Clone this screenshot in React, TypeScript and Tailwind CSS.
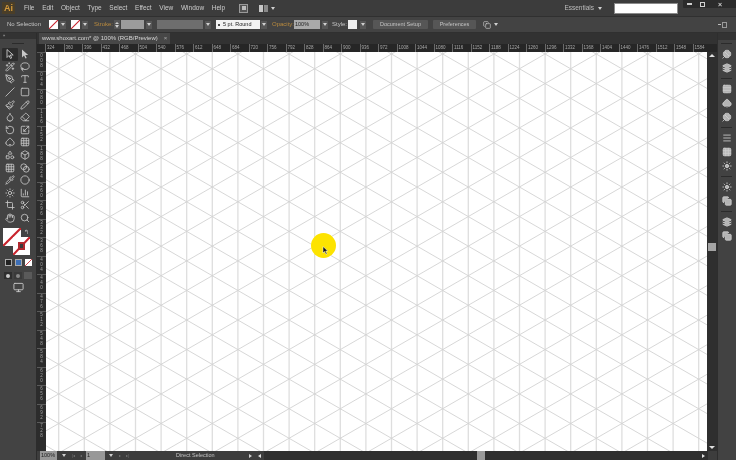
import {
  Circle,
  Droplet,
  Eraser,
  Hand,
  Lasso,
  Layers,
  Paintbrush,
  Pencil,
  PenTool,
  Pipette,
  RotateCcw,
  Scaling,
  Search,
  Slash,
  Square,
  Sun,
  Type,
  Wand2,
  Blend,
  BarChart3,
  Grid3x3,
  Crop,
  Scissors,
  Shapes,
  Box,
  Copy,
  Menu,
  Table,
  Spade,
  Clover,
  Monitor,
} from 'lucide-react';

const menus = ['File', 'Edit', 'Object', 'Type', 'Select', 'Effect', 'View', 'Window', 'Help'];

const tools = [
  MousePointerHollow,
  MousePointerSolid,
  Wand2,
  Lasso,
  PenTool,
  Type,
  Slash,
  Square,
  Paintbrush,
  Pencil,
  Droplet,
  Eraser,
  RotateCcw,
  Scaling,
  Spade,
  Grid3x3,
  Shapes,
  Box,
  Grid3x3,
  Blend,
  Pipette,
  Circle,
  Sun,
  BarChart3,
  Crop,
  Scissors,
  Hand,
  Search,
];

function MousePointerHollow({ size = 10, className = '' }: { size?: number; className?: string }) {
  return (
    <svg width={size} height={size} viewBox="0 0 10 10" className={className}>
      <path d="M2 .5v8l2-2 1.5 3 1.2-.6L5.3 6h2.900z" fill="none" stroke="currentColor" strokeWidth="0.9" />
    </svg>
  );
}

function MousePointerSolid({ size = 10, className = '' }: { size?: number; className?: string }) {
  return (
    <svg width={size} height={size} viewBox="0 0 10 10" className={className}>
      <path d="M2 .5v8l2-2 1.5 3 1.2-.6L5.3 6h2.900z" fill="currentColor" />
    </svg>
  );
}

function Caret({ className = 'border-t-[#cfcfcf]' }: { className?: string }) {
  return <div className={`h-0 w-0 border-x-[2.5px] border-t-[3px] border-x-transparent ${className}`} />;
}

function DropBtn({ className = 'mx-0' }: { className?: string }) {
  return (
    <div className={`flex h-[8px] w-[6px] items-center justify-center bg-[#565656] ${className}`}>
      <Caret />
    </div>
  );
}

function NoneSwatch({ className = '' }: { className?: string }) {
  return (
    <div className={`bg-white ${className}`}>
      <svg viewBox="0 0 10 10" className="h-full w-full" preserveAspectRatio="none">
        <line x1="0" y1="10" x2="10" y2="0" stroke="#c8232c" strokeWidth="1.2" />
      </svg>
    </div>
  );
}

function IsoGrid() {
  const w = 661;
  const h = 399;
  const dx = 25.6;
  const dy = 29.56;
  const slope = 0.5774;
  const verticals = Array.from({ length: 27 }, (_, i) => 12.7 + i * dx);
  const offsets = Array.from({ length: 50 }, (_, i) => 2 + (i - 25) * dy);
  return (
    <svg width={w} height={h} className="block">
      {verticals.map((x) => (
        <line key={x} x1={x} y1={0} x2={x} y2={h} stroke="#dedede" strokeWidth="1.3" />
      ))}
      {offsets.map((o) => (
        <g key={o} stroke="#d2d2d2" strokeWidth="0.9">
          <line x1={0} y1={o - slope * 38.3} x2={w} y2={o + slope * (w - 38.3)} />
          <line x1={0} y1={o + slope * 38.3} x2={w} y2={o - slope * (w - 38.3)} />
        </g>
      ))}
    </svg>
  );
}

function Ruler() {
  const labels = Array.from({ length: 36 }, (_, i) => 324 + i * 36);
  return (
    <div className="flex h-[8px] items-center overflow-hidden bg-[#262626] pl-[8px]">
      {labels.map((n) => (
        <div key={n} className="w-[18.5px] shrink-0 border-l border-[#6a6a6a] pl-[1px] text-[4.5px] leading-[8px] text-[#a8a8a8]">
          {n}
        </div>
      ))}
    </div>
  );
}

function VRuler() {
  const labels = Array.from({ length: 21 }, (_, i) => String(8 + i * 36).padStart(3, '0'));
  return (
    <div className="flex w-[9px] shrink-0 flex-col overflow-hidden bg-[#2c2c2c]">
      {labels.map((n, i) => (
        <div key={i} className="flex h-[18.5px] shrink-0 flex-col items-center border-t border-[#5a5a5a] text-[4.5px] leading-[5px] text-[#a0a0a0]">
          {n.split('').map((d, j) => (
            <span key={j}>{d}</span>
          ))}
        </div>
      ))}
    </div>
  );
}

function RightDock() {
  const groups = [
    [Clover, Layers],
    [Table, Spade, Clover],
    [Menu, Grid3x3, Sun],
    [Sun, Copy],
    [Layers, Copy],
  ];
  return (
    <div className="flex w-[19px] shrink-0 flex-col border-l border-[#2e2e2e] bg-[#424242]">
      <div className="h-[7px] bg-[#333333]" />
      {groups.map((g, i) => (
        <div key={i} className="flex flex-col items-center pr-[1px]">
          <div className="mb-[3px] mt-[3px] h-[1px] w-[11px] bg-[#2b2b2b]" />
          {g.map((Icon, j) => (
            <div key={j} className="flex h-[14px] items-center justify-center">
              <Icon size={10} className="fill-[#b4b4b4] text-[#cfcfcf]" />
            </div>
          ))}
        </div>
      ))}
    </div>
  );
}

function ToolColumn() {
  return (
    <div className="flex w-[37px] shrink-0 flex-col border-r border-[#2c2c2c] bg-[#434343]">
      <div className="flex h-[6px] items-center bg-[#333333] pl-[3px] text-[4px] leading-[6px] text-[#bbbbbb]">»</div>
      <div className="mx-auto mb-[4px] mt-[4px] h-[1px] w-[12px] bg-[#2b2b2b]" />
      <div className="grid grid-cols-2 auto-rows-[12.6px] pl-[2px] pr-[3px]">
        {tools.map((Icon, i) => (
          <div key={i} className={`flex items-center justify-center ${i === 0 ? 'rounded-[1px] bg-[#2c2c2c]' : ''}`}>
            <Icon size={10} className="text-[#c8c8c8]" />
          </div>
        ))}
      </div>
      <div className="relative mt-[4px] h-[30px]">
        <NoneSwatch className="absolute left-[3px] top-0 h-[18px] w-[18px]" />
        <NoneSwatch className="absolute left-[13px] top-[9px] h-[18px] w-[17px]" />
        <div className="absolute left-[18px] top-[14px] h-[8px] w-[7px] border-[2px] border-[#b0282e] bg-[#3a3a3a]" />
        <div className="absolute left-[24px] top-[1px] text-[6px] leading-[6px] text-[#c8c8c8]">↰</div>
      </div>
      <div className="mt-[1px] flex justify-center gap-[3px]">
        <div className="h-[7px] w-[7px] border border-[#aaaaaa] bg-[#222222]" />
        <div className="h-[7px] w-[7px] border border-[#aaaaaa] bg-[#3d6fb8]" />
        <NoneSwatch className="h-[7px] w-[7px]" />
      </div>
      <div className="mt-[6px] flex justify-center gap-[2px]">
        <div className="flex h-[7px] w-[8px] items-center justify-center bg-[#2e2e2e]"><div className="h-[4px] w-[4px] rounded-full bg-[#cccccc]" /></div>
        <div className="flex h-[7px] w-[8px] items-center justify-center bg-[#3a3a3a]"><div className="h-[4px] w-[4px] rounded-full bg-[#888888]" /></div>
        <div className="h-[7px] w-[8px] bg-[#5a5a5a]" />
      </div>
      <div className="mt-[3px] flex justify-center">
        <Monitor size={11} className="text-[#c8c8c8]" />
      </div>
    </div>
  );
}

function MenuBar() {
  return (
    <div className="flex h-[16px] shrink-0 items-center bg-[#3c3c3c]">
      <div className="ml-[2px] flex h-[12px] w-[13px] items-center justify-center bg-[#4a3e28] text-[9px] font-bold leading-none text-[#d49a3c]">Ai</div>
      <div className="ml-[9px] flex gap-[7.7px] text-[6.5px] text-[#cdcdcd]">
        {menus.map((m) => (
          <span key={m}>{m}</span>
        ))}
      </div>
      <div className="ml-[14px] flex h-[9px] w-[9px] items-center justify-center border border-[#9a9a9a] bg-[#555555]">
        <div className="h-[4px] w-[4px] bg-[#bdbdbd]" />
      </div>
      <div className="ml-[11px] flex items-center gap-[1px]">
        <div className="h-[7px] w-[4px] bg-[#c8c8c8]" />
        <div className="h-[7px] w-[4px] bg-[#8a8a8a]" />
        <div className="ml-[2px]"><Caret /></div>
      </div>
      <span className="ml-auto text-[6.5px] text-[#bdbdbd]">Essentials</span>
      <div className="ml-[4px]"><Caret /></div>
      <div className="ml-[12px] h-[11px] w-[64px] border border-[#8a8a8a] bg-white" />
      <div className="ml-[5px] flex h-[8px] w-[53px] items-center self-start rounded-bl-[1px] bg-[#2b2b2b] text-[#d0d0d0]">
        <div className="ml-[4px] h-[2px] w-[5px] bg-[#d0d0d0]" />
        <div className="relative ml-[8px] h-[5px] w-[5px] border border-[#d0d0d0]" />
        <span className="ml-[13px] text-[7px] font-bold leading-none">×</span>
      </div>
    </div>
  );
}

function ControlBar() {
  return (
    <div className="flex h-[17px] shrink-0 items-center border-y border-[#303030] bg-[#434343] text-[6px] text-[#c4c4c4]">
      <span className="ml-[7px] w-[42px] shrink-0">No Selection</span>
      <NoneSwatch className="h-[9px] w-[9px]" />
      <DropBtn className="ml-[2px]" />
      <NoneSwatch className="ml-[5px] h-[9px] w-[9px] bg-[#e9d7d7]" />
      <DropBtn className="ml-[2px]" />
      <span className="ml-[6px] w-[20px] text-[#b98a3e]">Stroke:</span>
      <div className="flex h-[9px] w-[6px] flex-col items-center justify-center gap-[1px] bg-[#555555]">
        <div className="h-0 w-0 border-x-[2px] border-b-[2px] border-x-transparent border-b-[#cfcfcf]" />
        <Caret className="border-t-[#cfcfcf]" />
      </div>
      <div className="ml-[1px] h-[9px] w-[23px] bg-[#9c9c9c]" />
      <DropBtn className="ml-[2px]" />
      <div className="ml-[5px] h-[9px] w-[46px] bg-[#6e6e6e]" />
      <DropBtn className="ml-[2px]" />
      <div className="ml-[5px] flex h-[9px] w-[44px] items-center bg-[#f2f2f2] pl-[2px] text-[5.5px] text-[#222222]">
        <div className="mr-[3px] h-[2px] w-[2px] rounded-full bg-[#111111]" />
        5 pt. Round
      </div>
      <DropBtn className="ml-[1px]" />
      <span className="ml-[5px] w-[22px] text-[#b98a3e]">Opacity:</span>
      <div className="h-[9px] w-[26px] bg-[#aaaaaa] pl-[1px] text-[5.5px] leading-[9px] text-[#222222]">100%</div>
      <DropBtn className="ml-[2px]" />
      <span className="ml-[4px] w-[16px]">Style:</span>
      <div className="h-[9px] w-[9px] bg-[#eeeeee]" />
      <DropBtn className="ml-[3px]" />
      <div className="ml-[7px] flex h-[9px] w-[55px] items-center justify-center rounded-[1px] bg-[#565656] text-[5.5px]">Document Setup</div>
      <div className="ml-[5px] flex h-[9px] w-[43px] items-center justify-center rounded-[1px] bg-[#565656] text-[5.5px]">Preferences</div>
      <Copy size={8} className="ml-[7px] text-[#cccccc]" />
      <div className="ml-[3px]"><Caret /></div>
      <div className="ml-auto mr-[9px] flex items-center gap-[1px]">
        <div className="h-[1px] w-[3px] bg-[#bbbbbb]" />
        <div className="h-[6px] w-[5px] border border-[#9a9a9a]" />
      </div>
    </div>
  );
}

function StatusBar() {
  return (
    <div className="flex h-[9px] shrink-0 items-center bg-[#3d3d3d] text-[5.5px] text-[#c4c4c4]">
      <div className="ml-[3px] h-[9px] w-[17px] bg-[#989898] pl-[1px] leading-[9px] text-[#222222]">100%</div>
      <div className="ml-[5px]"><Caret /></div>
      <span className="ml-[6px] text-[4px] text-[#777777]">|◂</span>
      <span className="ml-[5px] text-[4px] text-[#777777]">◂</span>
      <div className="ml-[4px] h-[9px] w-[19px] bg-[#989898] pl-[1px] leading-[9px] text-[#222222]">1</div>
      <div className="ml-[4px]"><Caret /></div>
      <span className="ml-[6px] text-[4px] text-[#777777]">▸</span>
      <span className="ml-[5px] text-[4px] text-[#777777]">▸|</span>
      <span className="ml-[47px] w-[73px]">Direct Selection</span>
      <div className="h-0 w-0 border-y-[2.5px] border-l-[3px] border-y-transparent border-l-[#d0d0d0]" />
      <div className="ml-[6px] h-0 w-0 border-y-[2.5px] border-r-[3px] border-y-transparent border-r-[#e0e0e0]" />
      <div className="ml-[3px] flex h-[9px] flex-1 bg-[#2f2f2f]">
        <div className="ml-[213px] h-[9px] w-[8px] bg-[#9a9a9a]" />
        <div className="ml-auto mr-[3px] self-center h-0 w-0 border-y-[2.5px] border-l-[3px] border-y-transparent border-l-[#e0e0e0]" />
      </div>
      <div className="h-[9px] w-[9px] bg-[#3d3d3d]" />
    </div>
  );
}

export default function App() {
  return (
    <div className="flex h-[460px] w-[736px] flex-col overflow-hidden bg-[#3c3c3c] font-['Liberation_Sans',sans-serif] blur-[0.3px]">
      <MenuBar />
      <ControlBar />
      <div className="flex min-h-0 flex-1">
        <ToolColumn />
        <div className="flex min-w-0 flex-1 flex-col">
          <div className="flex h-[11px] shrink-0 items-end bg-[#323232]">
            <div className="ml-[2px] flex h-[11px] w-[131px] items-center bg-[#474747] pl-[3px] text-[6px] text-[#d6d6d6]">
              www.shoxart.com* @ 100% (RGB/Preview)
              <span className="ml-[6px] text-[#aaaaaa]">×</span>
            </div>
          </div>
          <Ruler />
          <div className="flex min-h-0 flex-1">
            <VRuler />
            <div className="relative min-w-0 flex-1 overflow-hidden bg-white">
              <IsoGrid />
              <div className="absolute left-[265px] top-[181px] h-[25px] w-[25px] rounded-full bg-[#fde300]" />
              <svg width="7" height="9" viewBox="0 0 7 9" className="absolute left-[276px] top-[194px]">
                <path d="M1 .5v6.500l1.600-1.500L4 8.300l1-.5L3.700 5H5.800z" fill="#111111" stroke="#ffffff" strokeWidth="0.5" />
              </svg>
            </div>
            <div className="flex w-[10px] shrink-0 flex-col items-center bg-[#2f2f2f] pt-[2px]">
              <div className="h-0 w-0 border-x-[3px] border-b-[3px] border-x-transparent border-b-[#e0e0e0]" />
              <div className="mt-[186px] h-[8px] w-[8px] bg-[#a4a4a4]" />
              <div className="mb-[2px] mt-auto h-0 w-0 border-x-[3px] border-t-[3px] border-x-transparent border-t-[#e0e0e0]" />
            </div>
          </div>
          <StatusBar />
        </div>
        <RightDock />
      </div>
    </div>
  );
}
